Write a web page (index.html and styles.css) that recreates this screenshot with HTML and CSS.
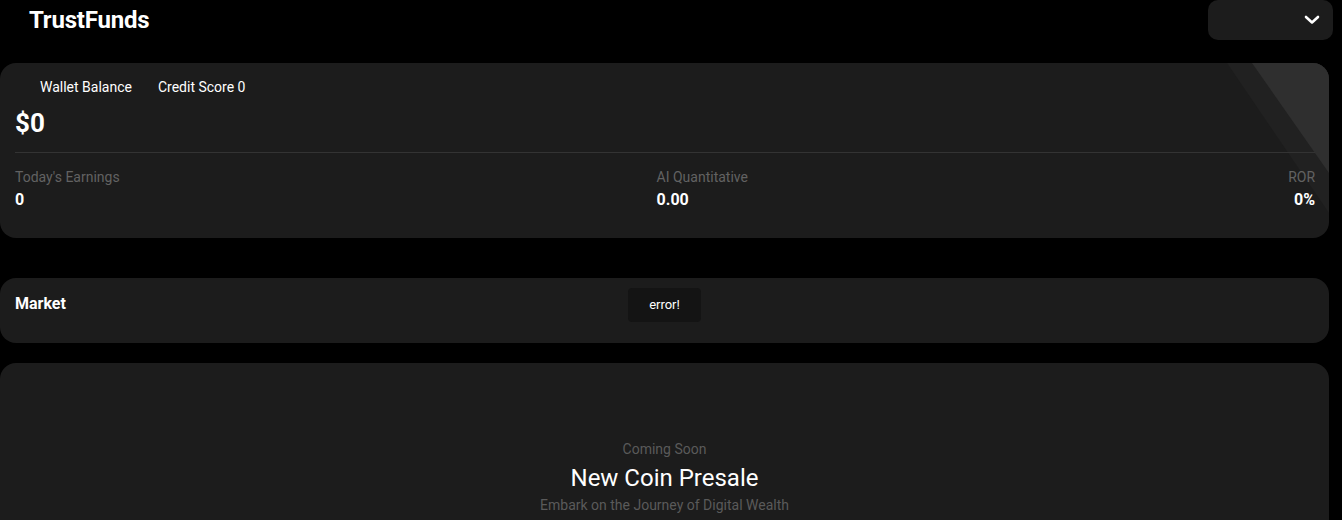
FILE: index.html
```html
<!DOCTYPE html>
<html lang="en">
<head>
  <meta charset="UTF-8">
  <meta name="viewport" content="width=device-width, initial-scale=1.0">
  <title>TrustFunds</title>
  <link rel="stylesheet" href="styles.css">
</head>
<body>

  <header class="topbar">
    <div class="logo">TrustFunds</div>
    <button class="lang-select">
      <svg width="16" height="10" viewBox="0 0 16 10"><path d="M2 2 L8 7.5 L14 2" fill="none" stroke="#fff" stroke-width="2.6" stroke-linecap="round" stroke-linejoin="round"/></svg>
    </button>
  </header>

  <main class="page">
    <section class="card balance-card">
      <svg class="card-deco" width="102" height="175" viewBox="0 0 102 175">
        <polygon points="0,0 102,0 102,150" fill="#212121"/>
        <polygon points="25,0 102,0 102,110" fill="#2f2f2f"/>
      </svg>
      <div class="balance-tabs">
        <div class="tab"><span class="tab-icon"></span>Wallet Balance</div>
        <div class="tab"><span class="tab-icon"></span>Credit Score 0</div>
      </div>
      <div class="balance-amount">$0</div>
      <div class="stats">
        <div class="stat">
          <div class="stat-label">Today's Earnings</div>
          <div class="stat-value">0</div>
        </div>
        <div class="stat stat-center">
          <div class="stat-label">AI Quantitative</div>
          <div class="stat-value">0.00</div>
        </div>
        <div class="stat stat-right">
          <div class="stat-label">ROR</div>
          <div class="stat-value">0%</div>
        </div>
      </div>
    </section>

    <section class="card market-card">
      <h3 class="market-title">Market</h3>
    </section>

    <section class="card presale-card">
      <div class="presale-sub">Coming Soon</div>
      <div class="presale-title">New Coin Presale</div>
      <div class="presale-sub">Embark on the Journey of Digital Wealth</div>
    </section>
  </main>

  <div class="toast">error!</div>

</body>
</html>
```

FILE: styles.css
```css
body {
  margin: 0;
  background-color: #000;
  color: #fff;
  font-family: Roboto, "Liberation Sans", sans-serif;
  position: relative;
  height: 520px;
  overflow: hidden;
}

.topbar {
  display: flex;
  justify-content: space-between;
  align-items: center;
  height: 40px;
  padding: 0 9px 0 29px;
}

.logo {
  font-size: 24px;
  font-weight: bold;
  letter-spacing: -0.2px;
  margin-top: -1px;
}

.lang-select {
  width: 125px;
  height: 40px;
  margin-top: -1px;
  background-color: #1c1c1c;
  border: none;
  border-radius: 10px;
  display: flex;
  justify-content: flex-end;
  align-items: center;
  padding: 0 13px 0 0;
}

.page {
  width: 1329px;
  padding-top: 23px;
}

.card {
  background-color: #1c1c1c;
  border-radius: 16px;
  position: relative;
  overflow: hidden;
}

.card-deco {
  position: absolute;
  top: 0;
  right: 0;
}

.balance-card {
  height: 175px;
  box-sizing: border-box;
  padding: 15px 14px 0 15px;
  margin-bottom: 40px;
}

.balance-tabs {
  display: flex;
  gap: 1px;
  font-size: 14px;
  height: 18px;
  line-height: 18px;
  position: relative;
}

.tab {
  display: flex;
  align-items: center;
}

.tab-icon {
  width: 20px;
  height: 18px;
  margin-right: 5px;
}

.balance-amount {
  font-size: 26px;
  font-weight: bold;
  margin-top: 12px;
  height: 44px;
  line-height: 30px;
  border-bottom: 1px solid #333;
  position: relative;
}

.stats {
  display: flex;
  padding-top: 15px;
  position: relative;
}

.stat {
  flex: 1;
}

.stat-center {
  padding-left: 10px;
}

.stat-right {
  flex: 0 0 auto;
  text-align: right;
}

.stat-label {
  font-size: 14px;
  color: #626262;
  line-height: 18px;
}

.stat-value {
  font-size: 16px;
  font-weight: bold;
  line-height: 20px;
  margin-top: 4px;
}

.market-card {
  height: 65px;
  padding: 16px 15px 15px;
  box-sizing: border-box;
  margin-bottom: 20px;
}

.market-title {
  margin: 0;
  font-size: 16px;
  line-height: 20px;
}

.presale-card {
  height: 200px;
  box-sizing: border-box;
  padding-top: 77px;
  text-align: center;
  border-bottom-left-radius: 0;
  border-bottom-right-radius: 0;
}

.presale-sub {
  font-size: 14px;
  color: #5a5a5a;
  line-height: 18px;
}

.presale-title {
  font-size: 24px;
  line-height: 30px;
  margin: 5px 0 3px;
}

.toast {
  position: absolute;
  top: 288px;
  left: 628px;
  width: 73px;
  height: 34px;
  line-height: 34px;
  text-align: center;
  font-size: 13px;
  background-color: #141414;
  border-radius: 4px;
}
```
